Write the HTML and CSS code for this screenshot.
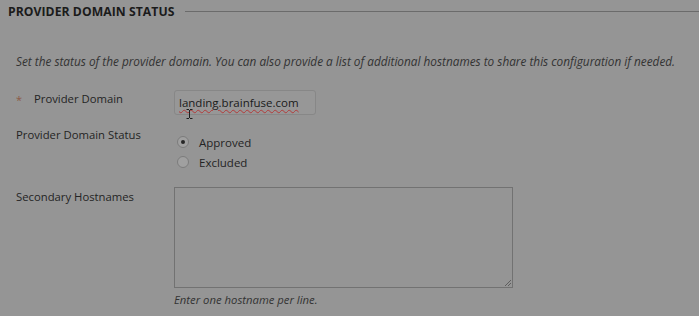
FILE: index.html
```html
<!DOCTYPE html>
<html>
<head>
<meta charset="utf-8">
<link rel="stylesheet" href="styles.css">
</head>
<body>
<div class="page">
  <div class="section-head">
    <h2 class="section-title">PROVIDER DOMAIN STATUS</h2>
    <div class="section-rule"></div>
  </div>
  <p class="intro">Set the status of the provider domain. You can also provide a list of additional hostnames to share this configuration if needed.</p>
  <div class="form">
    <div class="label label-req"><span class="req">*</span>Provider Domain</div>
    <div class="field">
      <div class="text-input"><span class="spell">landing.brainfuse.com</span><svg class="cursor" width="7" height="10" viewBox="0 0 7 10"><path d="M0.5 0.5h2.5M4 0.5h2.5M3.5 1v8M0.5 9.5h2.5M4 9.5h2.5" stroke="#1e1e1e" stroke-width="1" fill="none"/></svg></div>
    </div>

    <div class="label label-status">Provider Domain Status</div>
    <div class="field radios">
      <div class="radio-row"><span class="radio checked"></span>Approved</div>
      <div class="radio-row"><span class="radio"></span>Excluded</div>
    </div>

    <div class="label label-sec">Secondary Hostnames</div>
    <div class="field">
      <div class="textarea"><span class="grip"></span></div>
      <p class="hint">Enter one hostname per line.</p>
    </div>
  </div>
</div>
</body>
</html>
```

FILE: styles.css
```css
html, body {
  margin: 0;
  padding: 0;
  background: #959595;
}
body {
  width: 699px;
  height: 316px;
  overflow: hidden;
  font-family: "Open Sans", "Noto Sans", sans-serif;
  color: #252525;
}
.page {
  padding: 1px 0 0 8px;
}
.section-head {
  display: flex;
  align-items: center;
  gap: 11px;
  height: 20px;
}
.section-title {
  margin: 0;
  font-size: 12.2px;
  font-weight: 700;
  color: #1b1b1b;
  letter-spacing: 0.05px;
  white-space: nowrap;
}
.section-rule {
  flex: 1;
  height: 1px;
  background: #6b6b6b;
}
.intro {
  margin: 31px 0 0 8px;
  font-size: 11.8px;
  font-style: italic;
  color: #333;
  line-height: 18px;
  white-space: nowrap;
}
.form {
  display: grid;
  grid-template-columns: 158px 1fr;
  margin: 20px 0 0 8px;
  font-size: 11.3px;
}
.label {
  color: #242424;
  line-height: 18px;
}
.label-req {
  position: relative;
  padding-left: 18px;
}
.req {
  position: absolute;
  left: 0;
  top: 1px;
  color: #8c5a45;
  font-size: 11px;
}
.text-input {
  position: relative;
  box-sizing: border-box;
  width: 142px;
  height: 25px;
  border: 1px solid #878787;
  border-radius: 3px;
  background: #979797;
  padding: 3px 0 0 4px;
  line-height: 18px;
  font-size: 11.5px;
  color: #1a1a1a;
}
.spell {
  text-decoration: underline wavy #b23a3a;
  text-decoration-thickness: 1px;
  text-underline-offset: 2px;
}
.cursor {
  position: absolute;
  left: 11px;
  top: 18px;
}
.label-status {
  margin-top: 11px;
}
.radios {
  margin-top: 18px;
  display: flex;
  flex-direction: column;
  gap: 2px;
}
.radio-row {
  display: flex;
  align-items: center;
  height: 18px;
  padding-left: 3px;
  color: #242424;
  font-size: 11.5px;
}
.radio {
  box-sizing: border-box;
  width: 12px;
  height: 12px;
  border-radius: 50%;
  border: 1px solid #7c7c7c;
  background: #a0a0a0;
  margin-right: 10px;
  position: relative;
}
.radio.checked::after {
  content: "";
  position: absolute;
  left: 3px;
  top: 3px;
  width: 4px;
  height: 4px;
  border-radius: 50%;
  background: #262626;
}
.label-sec {
  margin-top: 17px;
}
.textarea {
  position: relative;
  box-sizing: border-box;
  margin-top: 16px;
  width: 339px;
  height: 101px;
  border: 1px solid #727272;
  background: #959595;
}
.grip {
  position: absolute;
  right: 1px;
  bottom: 1px;
  width: 6px;
  height: 6px;
  background: linear-gradient(135deg, transparent 45%, #5e5e5e 45%, #5e5e5e 55%, transparent 55%, transparent 70%, #5e5e5e 70%, #5e5e5e 80%, transparent 80%);
}
.hint {
  margin: 4px 0 0 0;
  font-size: 11.3px;
  font-style: italic;
  color: #333;
  line-height: 16px;
}
```
